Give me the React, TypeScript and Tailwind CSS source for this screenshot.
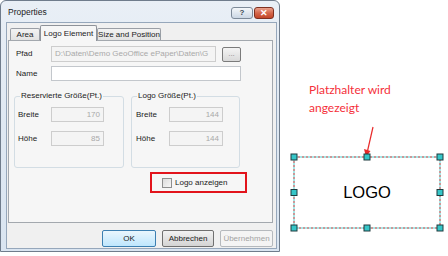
import type { ReactNode } from "react"

const ui = "font-['Liberation_Sans',Arial,sans-serif]"

function Field({ className, children, disabled = true, right = false }: { className: string; children?: ReactNode; disabled?: boolean; right?: boolean }) {
  return (
    <div
      className={`${className} h-[15px] flex items-center px-[3px] border overflow-hidden whitespace-nowrap text-[8px] ${
        disabled ? "border-[#cdcdcd] bg-[#f4f4f4] text-[#a9a9a9]" : "border-[#c3c7cc] bg-white text-black"
      } ${right ? "justify-end" : ""}`}
    >
      {children}
    </div>
  )
}

function Group({ title, className, children }: { title: string; className: string; children: ReactNode }) {
  return (
    <div className={`${className} relative h-[72px] rounded-[3px] border border-[#d3dde4] flex flex-col pt-[10px]`}>
      <span className="absolute -top-[7px] left-[5px] px-[1px] bg-[#f6f6f6] leading-[12px] text-[8px]">{title}</span>
      {children}
    </div>
  )
}

function Tab({ label, active = false, className }: { label: string; active?: boolean; className: string }) {
  return active ? (
    <div className={`${className} h-[16px] -mb-px relative z-10 flex items-center justify-center border border-b-0 border-[#8e9299] bg-[#f6f6f6] rounded-t-[2px] text-[8px]`}>
      {label}
    </div>
  ) : (
    <div className={`${className} h-[12px] flex items-center justify-center border border-b-0 border-[#9a9ea5] bg-gradient-to-b from-[#f3f3f3] to-[#e2e2e2] rounded-t-[2px] text-[8px]`}>
      {label}
    </div>
  )
}

function Dialog() {
  return (
    <div className={`${ui} w-[280px] h-[252px] shrink-0 flex flex-col rounded-t-[6px] border border-[#6f7c8c] bg-gradient-to-b from-[#e9eff6] via-[#dfe8f2] to-[#dae5f1] text-[#1b1b1b]`}>
      {/* title bar */}
      <div className="h-[21px] flex items-center justify-between pl-[7px] pr-[5px]">
        <span className="text-[8.5px] pt-[1px]">Properties</span>
        <div className="flex items-center gap-[1px] pt-[3px]">
          <div className="w-[22px] h-[12px] rounded-[3px] border border-[#7d8a99] bg-gradient-to-b from-[#f4f7fa] to-[#cbd7e4] flex items-center justify-center text-[8px] font-bold leading-none text-[#3b4653]">
            ?
          </div>
          <div className="w-[20px] h-[12px] rounded-[3px] border border-[#7e3020] bg-gradient-to-b from-[#e9a08c] via-[#d4664a] to-[#c24527] flex items-center justify-center text-[9px] font-bold leading-none text-white">
            ✕
          </div>
        </div>
      </div>

      {/* client area */}
      <div className="flex-1 ml-[5px] mr-[2px] mb-[2px] border border-[#96a7bb] bg-[#f0f0f0] flex flex-col">
        <div className="mt-[2px] ml-[3px] h-[15px] flex items-end">
          <Tab label="Area" className="w-[30px]" />
          <Tab label="Logo Element" active className="w-[57px]" />
          <Tab label="Size and Position" className="w-[64px]" />
        </div>

        <div className="ml-[1px] w-[265px] h-[183px] border border-[#a3a8ae] bg-[#f6f6f6] flex flex-col pl-[7px] pt-[5px] text-[8px]">
          <div className="h-[16px] flex items-center">
            <span className="w-[35px]">Pfad</span>
            <Field className="w-[165px] h-[16px]">D:\Daten\Demo GeoOffice ePaper\Daten\G</Field>
            <div className="ml-[6px] w-[19px] h-[15px] rounded-[2px] border border-[#7b7b7b] bg-gradient-to-b from-[#f4f4f4] to-[#d9d9d9] flex items-center justify-center text-[8px] leading-none text-[#8a8a8a]">
              ...
            </div>
          </div>

          <div className="mt-[4px] h-[15px] flex items-center">
            <span className="w-[35px]">Name</span>
            <Field className="w-[190px]" disabled={false} />
          </div>

          <div className="mt-[15px] -ml-[2px] flex gap-[7px]">
            <Group title="Reservierte Größe(Pt.)" className="w-[110px] pl-[3px]">
              <div className="flex items-center">
                <span className="w-[33px]">Breite</span>
                <Field className="w-[53px]" right>170</Field>
              </div>
              <div className="mt-[9px] flex items-center">
                <span className="w-[33px]">Höhe</span>
                <Field className="w-[53px]" right>85</Field>
              </div>
            </Group>
            <Group title="Logo Größe(Pt.)" className="w-[109px] pl-[4px]">
              <div className="flex items-center">
                <span className="w-[33px]">Breite</span>
                <Field className="w-[54px]" right>144</Field>
              </div>
              <div className="mt-[9px] flex items-center">
                <span className="w-[33px]">Höhe</span>
                <Field className="w-[54px]" right>144</Field>
              </div>
            </Group>
          </div>

          <div className="mt-[4px] ml-[134px] w-[97px] h-[21px] border-2 border-[#e2141c] flex items-center pl-[10px]">
            <div className="w-[10px] h-[10px] border border-[#8e8f8f] bg-gradient-to-br from-[#dcdcdc] to-[#f7f7f7]" />
            <span className="ml-[3px]">Logo anzeigen</span>
          </div>
        </div>

        <div className="mt-[7px] pr-[3px] flex justify-end gap-[6px] text-[8px]">
          <div className="w-[54px] h-[17px] rounded-[2px] border border-[#3c7fb1] bg-gradient-to-b from-[#eaf6fd] to-[#bee6fd] flex items-center justify-center">
            OK
          </div>
          <div className="w-[52px] h-[17px] rounded-[2px] border border-[#707070] bg-gradient-to-b from-[#f2f2f2] to-[#d4d4d4] flex items-center justify-center">
            Abbrechen
          </div>
          <div className="w-[53px] h-[17px] rounded-[2px] border border-[#b5b9bd] bg-[#f4f4f4] flex items-center justify-center text-[#a3a3a3]">
            Übernehmen
          </div>
        </div>
      </div>
    </div>
  )
}

function Annotation() {
  const handles = [
    [14, 157], [87, 157], [160, 157],
    [14, 192.5], [160, 192.5],
    [14, 228], [87, 228], [160, 228],
  ]
  return (
    <div className="relative flex-1 h-[256px]">
      <div className="pl-[29px] pt-[81px] text-[12px] leading-[18px] text-[#f5303a] font-['Lato',sans-serif]">
        Platzhalter wird
        <br />
        angezeigt
      </div>
      <svg className="absolute inset-0" width="168" height="256" viewBox="0 0 168 256">
        <rect x="14" y="157" width="146" height="71" fill="white" stroke="#4fd2d2" strokeWidth="1" />
        <rect x="14" y="157" width="146" height="71" fill="none" stroke="#f04848" strokeWidth="1" strokeDasharray="2 2" />
        <line x1="93" y1="127" x2="87.5" y2="151" stroke="#e82a2a" strokeWidth="1.2" />
        <polygon points="86,157 84,149 90.5,151" fill="#e82a2a" />
        {handles.map(([x, y], i) => (
          <rect key={i} x={x - 3} y={y - 3} width="6" height="6" fill="#36c6c8" stroke="#1e3b3e" strokeWidth="1" />
        ))}
      </svg>
      <span className="absolute left-[14px] top-[157px] w-[146px] h-[71px] flex items-center justify-center text-[16.5px] text-black font-['Liberation_Sans',Arial,sans-serif]">
        LOGO
      </span>
    </div>
  )
}

export default function App() {
  return (
    <div className="w-[448px] h-[256px] bg-white flex overflow-hidden">
      <Dialog />
      <Annotation />
    </div>
  )
}
